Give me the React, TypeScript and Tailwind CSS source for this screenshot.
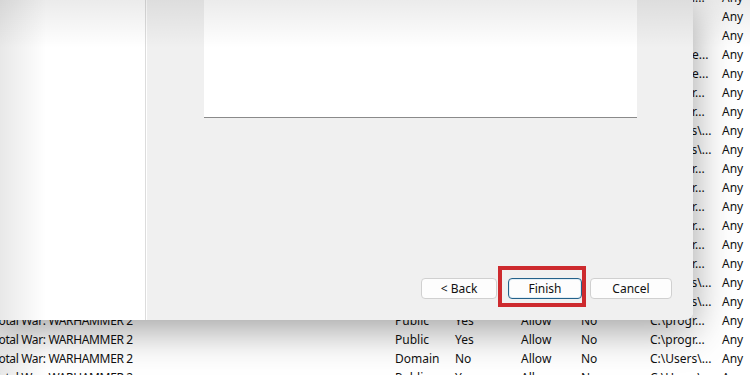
import React from 'react';

interface RuleRow {
  name: string;
  profile: string;
  enabled: string;
  action: string;
  override: string;
  program: string;
  local: string;
}

const PATHS = [
  'C:\\progr...',
  'Any',
  'Any',
  'C:\\Game...',
  'C:\\Game...',
  'C:\\progr...',
  'C:\\progr...',
  'C:\\Users\\...',
  'C:\\Users\\...',
  'C:\\progr...',
  'C:\\progr...',
  'C:\\progr...',
  'C:\\progr...',
  'C:\\progr...',
  'C:\\progr...',
  'C:\\Users\\...',
  'C:\\Users\\...',
  'C:\\progr...',
  'C:\\progr...',
  'C:\\Users\\...',
  'C:\\Users\\...',
];

const PROFILES = ['Public', 'Public', 'Domain', 'Public'];
const ENABLED = ['Yes', 'Yes', 'No', 'Yes'];

const RULES: RuleRow[] = PATHS.map((path, i) => ({
  name: 'Total War: WARHAMMER 2',
  profile: PROFILES[(i + 3) % 4],
  enabled: ENABLED[(i + 3) % 4],
  action: 'Allow',
  override: 'No',
  program: path,
  local: 'Any',
}));

function RuleList() {
  return (
    <div className="mt-[-12px] flex flex-col text-[12px] text-[#111]">
      {RULES.map((r, i) => (
        <div key={i} className="flex h-[19px] items-center whitespace-nowrap">
          <span className="ml-[-7px] w-[402px] tracking-[-0.35px]">{r.name}</span>
          <span className="w-[60px]">{r.profile}</span>
          <span className="w-[66px]">{r.enabled}</span>
          <span className="w-[60px]">{r.action}</span>
          <span className="w-[69px]">{r.override}</span>
          <span className="w-[72px]">{r.program}</span>
          <span>{r.local}</span>
        </div>
      ))}
    </div>
  );
}

function WizardButton({ label, primary, width }: { label: string; primary?: boolean; width: string }) {
  return (
    <button
      className={`flex h-[21px] items-center justify-center rounded-[4px] border bg-[#fdfdfd] text-[12px] text-[#111] ${width} ${
        primary ? 'border-[#23618a] shadow-[inset_0_0_0_1px_#e3eef5]' : 'border-[#d0d0d0]'
      }`}
    >
      {label}
    </button>
  );
}

export default function App() {
  return (
    <div className="relative h-[375px] w-[750px] overflow-hidden bg-white font-['Noto_Sans','Open_Sans',sans-serif]">
      <RuleList />

      {/* wizard window over the rules list */}
      <div className="absolute left-0 top-0 flex h-[320px] w-[693px] overflow-hidden rounded-br-[8px] shadow-[0_10px_40px_rgba(0,0,0,0.38)]">
        <div className="w-[145px] bg-white" />
        <div className="w-px bg-[#dcdcdc]" />
        <div className="w-px bg-white" />
        <div className="flex flex-1 flex-col bg-[#f0f0f0]">
          <div className="ml-[57px] h-[118px] w-[433px] border-b border-[#8a8a8a] bg-white" />
          <div className="flex-1" />
          <div className="flex items-center pb-[21px] pl-[274px]">
            <WizardButton label="< Back" width="w-[76px]" />
            <div className="relative ml-[11px]">
              <WizardButton label="Finish" primary width="w-[74px]" />
              <div className="pointer-events-none absolute left-[-10px] top-[-12px] h-[41px] w-[88px] border-4 border-[#cd2a2e]" />
            </div>
            <div className="ml-[8px]">
              <WizardButton label="Cancel" width="w-[82px]" />
            </div>
          </div>
        </div>
      </div>

      {/* soft vignette along top and left edges */}
      <div className="pointer-events-none absolute inset-x-0 top-0 h-[48px] bg-gradient-to-b from-[rgba(0,0,0,0.08)] to-transparent" />
      <div className="pointer-events-none absolute inset-y-0 left-0 w-[46px] bg-gradient-to-r from-[rgba(0,0,0,0.09)] to-transparent" />
    </div>
  );
}
